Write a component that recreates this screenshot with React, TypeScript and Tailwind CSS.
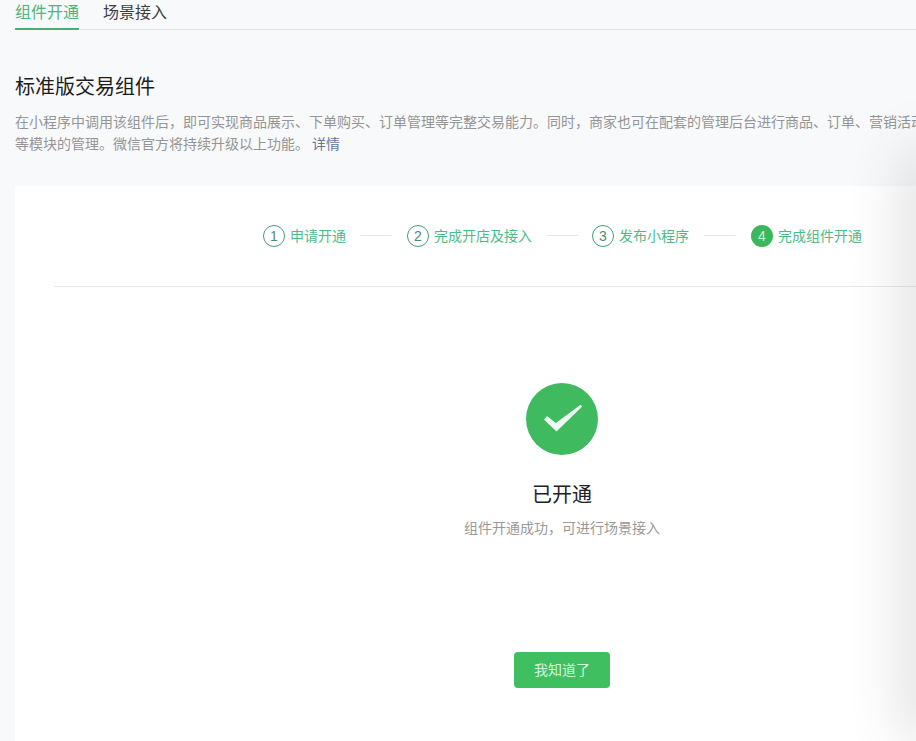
import * as React from 'react';

const cjk = "font-['Noto_Sans_CJK_SC','Noto_Sans',sans-serif]";

const Step = ({ index, label, active, className }: { index: number; label: string; active?: boolean; className?: string }) => (
  <div className={`flex items-center shrink-0 ${className ?? ''}`}>
    <div
      className={
        active
          ? 'flex h-[22px] w-[22px] items-center justify-center rounded-full bg-[#3cb75c] text-[14px] text-[#c9f2d4]'
          : 'flex h-[22px] w-[22px] items-center justify-center rounded-full border border-[#3f9f78] text-[14px] text-[#4f8a72]'
      }
    >
      <span className="font-['Liberation_Sans',sans-serif] font-light">{index}</span>
    </div>
    <span className="mb-[2px] ml-[5px] whitespace-nowrap text-[14px] leading-[20px] text-[#4dbb88]">{label}</span>
  </div>
);

const StepLine = ({ className }: { className: string }) => (
  <div className={`mb-[1px] h-px shrink-0 bg-[#e6e6e6] ${className}`} />
);

export default function App() {
  return (
    <div className={`relative h-[741px] w-[916px] overflow-hidden bg-[#f8f9fb] ${cjk}`}>
      <div className="w-[1109px]">
        <div className="ml-[15px] flex h-[30px] border-b border-[#e0e2e4]">
          <div className="h-[30px] w-[64px] border-b-2 border-[#45b073] text-[16px] leading-[23px] text-[#4fb47c]">组件开通</div>
          <div className="ml-[24px] text-[16px] leading-[23px] text-[#3d3d3d]">场景接入</div>
        </div>

        <h1 className="ml-[15px] mt-[41px] text-[20px] font-normal leading-[30px] text-[#1c1c1c]">标准版交易组件</h1>
        <div className="ml-[15px] mt-[9px] whitespace-nowrap text-[14px] leading-[22px] text-[#959595]">
          <p>在小程序中调用该组件后，即可实现商品展示、下单购买、订单管理等完整交易能力。同时，商家也可在配套的管理后台进行商品、订单、营销活动</p>
          <p>
            等模块的管理。微信官方将持续升级以上功能。<span className="ml-[3px] text-[#66759c]">详情</span>
          </p>
        </div>

        <div className="ml-[15px] mt-[32px] h-[556px] bg-white">
          <div className="flex h-[100px] items-center pl-[248px]">
            <Step index={1} label="申请开通" />
            <StepLine className="ml-[15px] w-[30px]" />
            <Step index={2} label="完成开店及接入" className="ml-[16px]" />
            <StepLine className="ml-[15px] w-[31px]" />
            <Step index={3} label="发布小程序" className="ml-[14px]" />
            <StepLine className="ml-[15px] w-[31px]" />
            <Step index={4} label="完成组件开通" active className="ml-[16px]" />
          </div>
          <div className="ml-[39px] h-px bg-[#e9e9e9]" />

          <div className="flex flex-col items-center">
            <div className="mt-[96px] h-[72px] w-[72px] rounded-full bg-[#3fba5f]">
              <svg width="72" height="72" viewBox="0 0 72 72">
                <path d="M18 36.5 L21 33 L29.8 40 L54.6 21.8 L56.2 23.4 L30.5 48.5 Z" fill="#eefaf1" />
              </svg>
            </div>
            <div className="mt-[24px] text-[20px] leading-[30px] text-[#222222]">已开通</div>
            <div className="mt-[8px] whitespace-nowrap text-[14px] leading-[20px] text-[#999999]">组件开通成功，可进行场景接入</div>
            <button className="mt-[115px] h-[36px] w-[96px] rounded-[4px] bg-[#40bf60] pb-[2px] text-[14px] text-[#d4f5dc]">我知道了</button>
          </div>
        </div>
      </div>

      {/* drawer shadow, the drawer itself sits off the right edge */}
      <div className="pointer-events-none absolute -right-[20px] bottom-0 top-[150px] w-[20px] shadow-[0_0_60px_rgba(0,0,0,0.3)]" />
    </div>
  );
}
